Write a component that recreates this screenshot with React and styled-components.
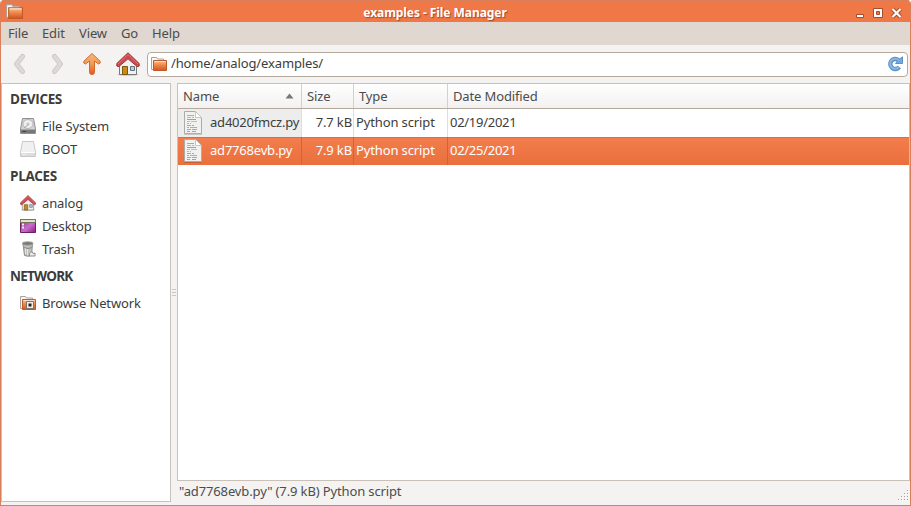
import React from "react";
import styled, { createGlobalStyle } from "styled-components";

const Global = createGlobalStyle`
  * { box-sizing: border-box; }
  body { margin: 0; background: #fff; overflow: hidden; }
  svg { flex: none; }
`;

const Window = styled.div`
  width: 911px;
  height: 506px;
  display: flex;
  flex-direction: column;
  border: 1px solid #d97f5c;
  border-top: 0;
  border-radius: 4px 4px 0 0;
  overflow: hidden;
  background: #f4f3f2;
  color: #3c3c3c;
  font: 13px/18px "Noto Sans", "Open Sans", sans-serif;
  letter-spacing: -0.13px;
  white-space: nowrap;
  cursor: default;
`;

const TitleBar = styled.header`
  height: 22px;
  flex: none;
  display: grid;
  grid-template-columns: 40px 1fr 78px;
  align-items: center;
  padding: 0 9px 0 6px;
  margin: 0 -1px;
  background: #f07746;
  border-top: 1px solid #d97f5c;
`;

const Title = styled.h1`
  margin: 0;
  padding-top: 2px;
  text-align: center;
  color: #fff;
  font: bold 12px/18px "Noto Sans", "Open Sans", sans-serif;
  letter-spacing: -0.06px;
  text-shadow: 1px 1px 1px #a24a24;
`;

const WindowButtons = styled.div`
  display: flex;
  justify-content: flex-end;
  padding-top: 2px;
`;

const MenuBar = styled.nav`
  height: 23px;
  flex: none;
  display: flex;
  gap: 14px;
  padding: 2px 7px;
  background: #dfd7d0;
  color: #4c4c4c;
`;

const MenuItem = styled.span`
  width: ${(p) => p.$width}px;
`;

const ToolBar = styled.div`
  height: 38px;
  flex: none;
  display: flex;
  align-items: center;
  padding: 0 2px 0 12px;
`;

const ToolButton = styled.div`
  width: ${(p) => p.$width}px;
  height: 24px;
  display: flex;
`;

const PathField = styled.div`
  flex: 1;
  height: 25px;
  display: flex;
  align-items: center;
  gap: 4px;
  padding: 0 4px 1px 3px;
  background: #fff;
  border: 1px solid #b5a99d;
  border-radius: 4px;
`;

const PathText = styled.span`
  flex: 1;
  padding-bottom: 1px;
`;

const Body = styled.div`
  flex: 1;
  min-height: 0;
  display: flex;
`;

const Sidebar = styled.aside`
  width: 170px;
  height: 419px;
  background: #fff;
  border: 1px solid #c9c1b8;
`;

const Heading = styled.h2`
  margin: 0;
  height: 31px;
  padding: 6px 0 0 8px;
  font: bold 13.5px/18px "Open Sans", "Noto Sans", sans-serif;
  letter-spacing: ${(p) => p.$spacing}px;
`;

const Place = styled.div`
  height: 23px;
  display: flex;
  align-items: center;
  gap: 6px;
  padding: 0 0 1px 18px;
`;

const Label = styled.span`
  padding-bottom: 2px;
  letter-spacing: ${(p) => p.$spacing || -0.13}px;
`;

const PlaceLabel = styled(Label)`
  padding-bottom: 0;
`;

const Splitter = styled.div`
  width: 6px;
  height: 419px;
  display: flex;
  flex-direction: column;
  align-items: center;
  justify-content: center;
  gap: 2px;
`;

const Grip = styled.i`
  width: 4px;
  height: 1px;
  background: #cbc5bf;
`;

const Main = styled.main`
  flex: 1;
  display: flex;
  flex-direction: column;
`;

const FileList = styled.section`
  height: 398px;
  background: #fff;
  border: 1px solid #c9c1b8;
`;

const ListRow = styled.div`
  display: grid;
  grid-template-columns: 124px 52px 94px 1fr;
  height: 28px;
  color: ${(p) => (p.$selected ? "#fff" : "#3c3c3c")};
  background: ${(p) => (p.$selected ? "linear-gradient(#f37d4d, #ea6f3d)" : "#fff")};
  box-shadow: ${(p) => (p.$selected ? "inset 0 1px #e36a3b" : "none")};
`;

const ListHeader = styled(ListRow)`
  height: 25px;
  color: #4c4c4c;
  background: linear-gradient(#fff, #f3f1f0);
  border-bottom: 1px solid #b5a99d;
`;

const HeaderCell = styled.div`
  display: flex;
  align-items: center;
  justify-content: space-between;
  padding: 0 7px 0 5px;
  border-right: 1px solid #d5d0cb;
  &:last-child { border-right: 0; }
`;

const Cell = styled.div`
  display: flex;
  align-items: center;
  justify-content: ${(p) => (p.$end ? "flex-end" : "flex-start")};
  gap: 7px;
  padding: 0 ${(p) => (p.$end ? 1 : 0)}px 0 ${(p) => (p.$icon ? 5 : 2)}px;
  background: ${(p) => (p.$shade ? "#ededed" : "transparent")};
  border-right: 1px solid ${(p) => (p.$selected ? "#d36236" : "#dedede")};
  &:last-child { border-right: 0; }
`;

const StatusBar = styled.footer`
  flex: 1;
  display: flex;
  justify-content: space-between;
  padding: 1px 0 0 2px;
  color: #4c4c4c;
`;

const GripCorner = styled.div`
  display: flex;
  padding-top: 8px;
`;

const Folder = ({ size = 16, network }) => (
  <svg width={size} height={size} viewBox="0 0 16 16">
    <defs>
      <linearGradient id="folder" x2="0" y2="1">
        <stop stopColor="#f8c19a" />
        <stop offset=".5" stopColor="#ec8444" />
        <stop offset="1" stopColor="#d9531e" />
      </linearGradient>
    </defs>
    <path d="M.5 13.5V1.5H5.500L6.500 3H12.500V13.500Z" fill="#f8f7f6" stroke="#aaa19b" />
    <path d="M2.500 4.500H15.500V14.500H2.500Z" fill="url(#folder)" stroke="#bd5c29" />
    <path d="M3.500 5.500H14.500" stroke="#ffdbc2" />
    {network && (
      <>
        <path d="M6.500 6.500H13.500V13.500H6.500Z" fill="#efefec" stroke="#777770" />
        <rect x="8.500" y="8.500" width="3" height="3" fill="#222" />
      </>
    )}
  </svg>
);

const House = ({ size }) => (
  <svg width={size} height={size} viewBox="0 0 24 24">
    <ellipse cx="12" cy="22.500" rx="10.500" ry="1.300" fill="#aaa" opacity=".6" />
    <path d="M3.500 12 12 4 20.500 12V22.500H3.500Z" fill="#f1f1ef" stroke="#777a76" />
    <path d="M6.500 14.500H11.500V22.500H6.500Z" fill="#c98b18" stroke="#805613" />
    <path d="M14.500 14.500H18.500V18.500H14.500Z" fill="#b5cbdc" stroke="#65717b" />
    <path d="M12 .8 .8 11.500V14Q2 15.200 3.500 14L12 6.800 20.500 14Q22 15.200 23.200 14V11.500Z" fill="#cb4a4f" stroke="#a5343a" strokeLinejoin="round" />
    <path d="M2 12 12 2.500 22 12" fill="none" stroke="#db7577" />
  </svg>
);

const UpArrow = () => (
  <svg width="20" height="24" viewBox="0 0 20 24">
    <defs>
      <linearGradient id="up" x2="0" y2="1">
        <stop stopColor="#f3b878" />
        <stop offset=".5" stopColor="#f19a55" />
        <stop offset="1" stopColor="#e4571d" />
      </linearGradient>
    </defs>
    <path d="M10 1.500 18.200 9.300Q19 11.500 16.500 12L12.500 9V20.500Q12.500 22.500 10 22.500T7.500 20.500V9L3.500 12Q1 11.500 1.800 9.300Z" fill="url(#up)" stroke="#d36b31" strokeLinejoin="round" />
  </svg>
);

const Chevron = ({ right }) => (
  <svg width="12" height="24" viewBox="0 0 12 24">
    <path d={right ? "M2.500 4.500 8.500 12 2.500 19.500" : "M9.500 4.500 3.500 12 9.500 19.500"} fill="none" stroke="#ccc8c5" strokeWidth="5" strokeLinecap="round" strokeLinejoin="round" />
    <path d={right ? "M2.500 4.500 8.500 12 2.500 19.500" : "M9.500 4.500 3.500 12 9.500 19.500"} fill="none" stroke="#dcd9d6" strokeWidth="3.200" strokeLinecap="round" strokeLinejoin="round" />
  </svg>
);

const Drive = ({ light }) => (
  <svg width="16" height="16" viewBox="0 0 16 16">
    <path d="M2.500.5H13.500L15.500 11V15.500H.5V11Z" fill={light ? "#f0f0f0" : "#d3d3d1"} stroke={light ? "#c8c8c8" : "#909090"} strokeLinejoin="round" />
    {!light && (
      <>
        <ellipse cx="8" cy="6" rx="5" ry="4.500" fill="#eee" stroke="#b5b5b5" />
        <circle cx="8" cy="6" r="1.500" fill="#c4c4c4" />
        <path d="M8 7 4 10" stroke="#aaa" />
      </>
    )}
    <path d="M1 11.500H15V15H1Z" fill={light ? "#ddd" : "#777"} />
    <path d="M1 11.500H15" stroke={light ? "#fff" : "#aaa"} />
    <path d="M2.500 13.500H6" stroke={light ? "#eee" : "#444"} />
  </svg>
);

const DesktopIcon = () => (
  <svg width="16" height="16" viewBox="0 0 16 16">
    <defs>
      <linearGradient id="desk" x2="1" y2="1">
        <stop stopColor="#8d3289" />
        <stop offset=".55" stopColor="#c96fc7" />
        <stop offset="1" stopColor="#8c188c" />
      </linearGradient>
    </defs>
    <path d="M.5 1.500H15.500V14.500H.5Z" fill="url(#desk)" stroke="#6b1f69" />
    <path d="M.5 1.500H15.500V4.500H.5Z" fill="#e4e2cf" stroke="#77735a" />
    <path d="M2 6.500H4M2 9.500H4" stroke="#eee" strokeWidth="2" />
  </svg>
);

const TrashIcon = () => (
  <svg width="16" height="16" viewBox="0 0 16 16">
    <path d="M3 3H12.500L11.500 14.500Q8 16 4.500 14.500Z" fill="#bfc1bd" stroke="#8e8e8e" />
    <ellipse cx="7.700" cy="2.500" rx="5.500" ry="1.800" fill="#777" stroke="#aaa" />
    <path d="M5.500 7V13M7.500 8V14" stroke="#e6e6e4" />
    <path d="M4 6.500Q8 8.500 12 6.500" fill="none" stroke="#888" />
    <path d="M9.500 12.500 12 10.500 13 12.500 15 12V15H9.500Z" fill="#eee" stroke="#8c8c8c" />
  </svg>
);

const codeLines = [
  ["#8db4cc", [[5, 12]]],
  ["#9bbfd4", [[5, 9], [10, 12]]],
  ["#7fa9c6", [[5, 14]]],
  ["#a9c3d4", [[5, 8], [9, 15]]],
  ["#dc9fc8", [[5, 7], [8, 9]]],
  ["#d08fbd", [[5, 9], [10, 12]]],
  ["#8fc196", [[5, 7], [8, 15]]],
  ["#c495b4", [[5, 9], [10, 15]]],
  ["#cf8f93", [[5, 8], [10, 14]]],
];
const Script = () => (
  <svg width="20" height="24" viewBox="0 0 20 24">
    <path d="M1.500.5H12.500L18.500 6.500V22.500H1.500Z" fill="#f1f1ef" stroke="#abadaa" />
    <path d="M1 23.500H19" stroke="#000" opacity=".15" />
    <path d="M12.500.5V6.500H18.500Z" fill="#fff" stroke="#c6c7c4" strokeLinejoin="round" />
    {codeLines.map(([color, spans], i) =>
      spans.map(([a, b]) => (
        <rect key={`${i}-${a}`} x={a - 1} y={4 + i * 2} width={b - a} height="1" fill={color} />
      ))
    )}
  </svg>
);

const Reload = () => (
  <svg width="16" height="16" viewBox="0 0 16 16">
    <path d="M11.500 4.200A5 5 0 1 0 12.300 11" fill="none" stroke="#5c92c9" strokeWidth="4.400" />
    <path d="M8.500 7.500H15.500V.8L12.500 3Z" fill="#78a9da" stroke="#5c92c9" strokeLinejoin="round" />
    <path d="M11.800 4.400A5 5 0 1 0 11.900 11" fill="none" stroke="#8ab7e2" strokeWidth="2" />
  </svg>
);

const Controls = () => (
  <svg width="46" height="12" viewBox="0 0 46 12">
    <path d="M.5 7.500H7.500V10.500H.5Z" fill="#fff" stroke="#a54d2b" />
    <path d="M17.500 1.500H26.500V10.500H17.500Z" fill="#fff" stroke="#a54d2b" />
    <path d="M20.500 4.500H23.500V7.500H20.500Z" fill="#f07746" stroke="#a54d2b" />
    <path d="M36.500 2 44.500 10M44.500 2 36.500 10" stroke="#a54d2b" strokeWidth="4" />
    <path d="M36.500 2 44.500 10M44.500 2 36.500 10" stroke="#fff" strokeWidth="2.200" />
  </svg>
);

const SizeGrip = () => (
  <svg width="12" height="12" viewBox="0 0 12 12">
    {[[9, 0], [6, 3], [9, 3], [3, 6], [6, 6], [9, 6], [0, 9], [3, 9], [6, 9], [9, 9]].map(([x, y]) => (
      <g key={`${x}-${y}`}>
        <rect x={x + 1} y={y + 1} width="1" height="1" fill="#fff" />
        <rect x={x} y={y} width="1" height="1" fill="#a79f97" />
      </g>
    ))}
  </svg>
);

const groups = [
  ["DEVICES", -0.35, [["File System", <Drive />], ["BOOT", <Drive light />]]],
  ["PLACES", -0.35, [["analog", <House size={16} />], ["Desktop", <DesktopIcon />], ["Trash", <TrashIcon />]]],
  ["NETWORK", -0.8, [["Browse Network", <Folder network />]]],
];

const files = [
  ["ad4020fmcz.py", "7.7 kB", "02/19/2021"],
  ["ad7768evb.py", "7.9 kB", "02/25/2021"],
];

export default function App() {
  return (
    <>
      <Global />
      <Window>
        <TitleBar>
          <Folder size={17} />
          <Title>examples - File Manager</Title>
          <WindowButtons><Controls /></WindowButtons>
        </TitleBar>
        <MenuBar>
          {[["File", 20], ["Edit", 23], ["View", 28], ["Go", 17], ["Help", 28]].map(([t, w]) => (
            <MenuItem key={t} $width={w}>{t}</MenuItem>
          ))}
        </MenuBar>
        <ToolBar>
          <ToolButton $width={39}><Chevron /></ToolButton>
          <ToolButton $width={30}><Chevron right /></ToolButton>
          <ToolButton $width={34}><UpArrow /></ToolButton>
          <ToolButton $width={31}><House size={24} /></ToolButton>
          <PathField>
            <Folder />
            <PathText>/home/analog/examples/</PathText>
            <Reload />
          </PathField>
        </ToolBar>
        <Body>
          <Sidebar>
            {groups.map(([name, spacing, items]) => (
              <React.Fragment key={name}>
                <Heading $spacing={spacing}>{name}</Heading>
                {items.map(([label, icon]) => (
                  <Place key={label}>{icon}<PlaceLabel>{label}</PlaceLabel></Place>
                ))}
              </React.Fragment>
            ))}
          </Sidebar>
          <Splitter><Grip /><Grip /><Grip /></Splitter>
          <Main>
            <FileList>
              <ListHeader>
                <HeaderCell>
                  Name
                  <svg width="9" height="6" viewBox="0 0 9 6"><path d="M.5 5.500 4.500.5 8.500 5.500Z" fill="#7b7772" /></svg>
                </HeaderCell>
                <HeaderCell>Size</HeaderCell>
                <HeaderCell>Type</HeaderCell>
                <HeaderCell>Date Modified</HeaderCell>
              </ListHeader>
              {files.map(([name, size, date], i) => (
                <ListRow key={name} $selected={i === 1}>
                  <Cell $icon $shade={i === 0} $selected={i === 1}><Script /><Label $spacing={-0.2}>{name}</Label></Cell>
                  <Cell $end $selected={i === 1}><Label>{size}</Label></Cell>
                  <Cell $selected={i === 1}><Label>Python script</Label></Cell>
                  <Cell><Label $spacing={-0.28}>{date}</Label></Cell>
                </ListRow>
              ))}
            </FileList>
            <StatusBar>
              <span>"ad7768evb.py" (7.9 kB) Python script</span>
              <GripCorner><SizeGrip /></GripCorner>
            </StatusBar>
          </Main>
        </Body>
      </Window>
    </>
  );
}
